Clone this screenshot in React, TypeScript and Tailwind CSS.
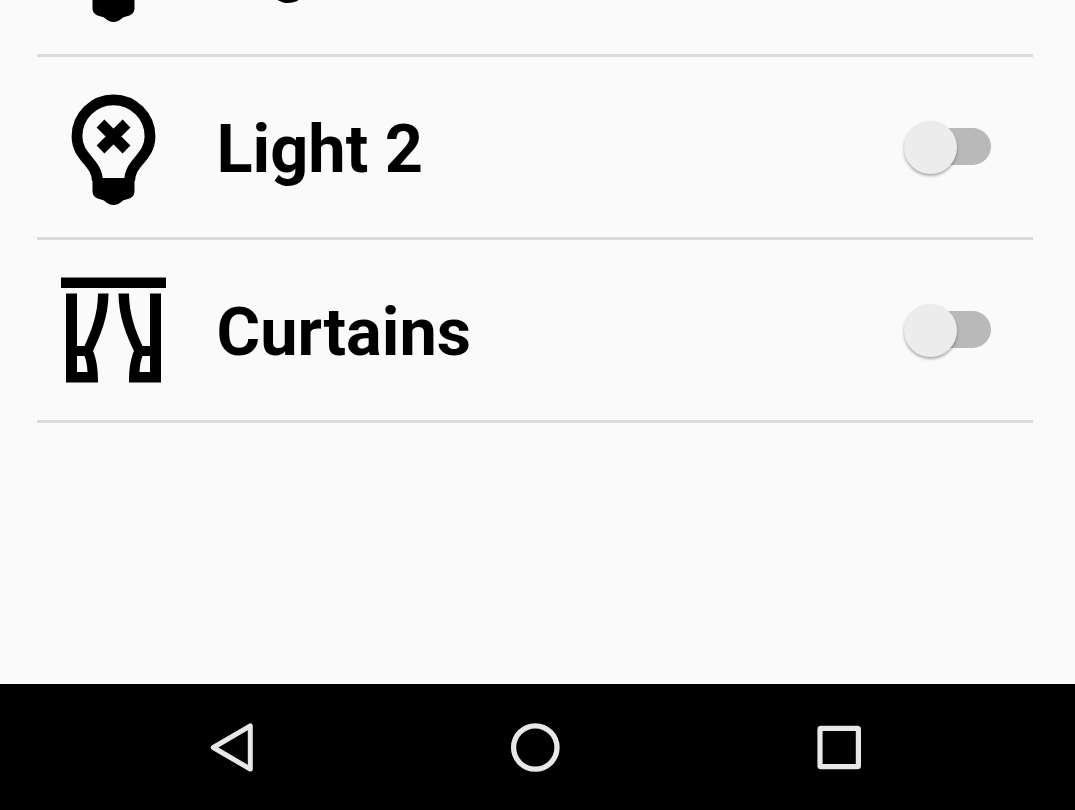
import type { ReactNode } from 'react';

function BulbIcon() {
  return (
    <svg className="h-[180px] w-[120px] shrink-0" viewBox="0 -28 120 180" fill="none">
      <path
        d="M42.400 96C42.400 77 22 73 22 51.300A36.500 36.500 0 0 1 95 51.300C95 73 74.600 77 74.600 96"
        stroke="#000"
        strokeWidth="10.800"
      />
      <path d="M37.500 93H79.500V107Q79 113 71 114.500L68 115.500Q63 120 58.500 120T49 115.500L46 114.500Q38 113 37.500 107Z" fill="#000" />
      <path d="M45.500 38.500L71.500 64.500M71.500 38.500L45.500 64.500" stroke="#000" strokeWidth="11" />
    </svg>
  );
}

const curtainPath =
  'M11 28.500H22V81H29.500C36 67 43 49 43 28.500H53.500C53.500 52 45 71 38 86C41.500 94 43 104 43 117.500H11ZM22 91V107H32.500Q32 97 29.500 91Z';

function CurtainsIcon() {
  return (
    <svg className="h-[180px] w-[120px] shrink-0" viewBox="0 -25 120 180" fill="#000">
      <path d="M6 12.500H111V23H6Z" />
      <path fillRule="evenodd" d={curtainPath} />
      <path fillRule="evenodd" transform="matrix(-1 0 0 1 117 0)" d={curtainPath} />
    </svg>
  );
}

function Toggle() {
  return (
    <button
      role="switch"
      aria-checked="false"
      className="mr-[42px] ml-auto flex h-[54px] w-[87px] shrink-0 items-start"
    >
      <span className="z-10 mt-px size-[53px] shrink-0 rounded-full bg-[#ececec] shadow-[0_2px_3px_rgba(0,0,0,0.32)]" />
      <span className="mt-[8px] -ml-[34px] h-[37px] w-[68px] shrink-0 rounded-full bg-[#b9b9b9]" />
    </button>
  );
}

function Row({ icon, label }: { icon: ReactNode; label: string }) {
  return (
    <li className="flex h-[183px] shrink-0 items-center border-b-3 border-[#dadada] pl-[18px]">
      {icon}
      <span className="ml-[41.500px] pt-[3px] text-[66.700px] leading-[80px] font-bold text-black">{label}</span>
      <Toggle />
    </li>
  );
}

export default function App() {
  return (
    <div className="flex h-[810px] w-[1075px] flex-col overflow-hidden bg-[#fafafa] font-['Roboto',sans-serif]">
      <main className="min-h-0 flex-1">
        <ul className="mr-[42px] ml-[37px] flex h-[423px] flex-col justify-end overflow-hidden">
          <Row icon={<BulbIcon />} label="Light 1" />
          <Row icon={<BulbIcon />} label="Light 2" />
          <Row icon={<CurtainsIcon />} label="Curtains" />
        </ul>
      </main>
      <nav className="flex h-[126px] shrink-0 items-center bg-black pt-[2px] pl-[195px]">
        <button aria-label="Back">
          <svg className="h-[76px] w-[80px]" viewBox="0 0 80 76" fill="none" stroke="#e8e8e8" strokeWidth="5" strokeLinejoin="round">
            <path d="M18.300 37.500L55.300 15.900V59.100Z" />
          </svg>
        </button>
        <button aria-label="Home" className="ml-[225px]">
          <svg className="h-[76px] w-[80px]" viewBox="0 0 80 76" fill="none" stroke="#e8e8e8" strokeWidth="5.300">
            <circle cx="35.300" cy="37.500" r="21.700" />
          </svg>
        </button>
        <button aria-label="Recent apps" className="ml-[220px]">
          <svg className="h-[76px] w-[80px]" viewBox="0 0 80 76" fill="none" stroke="#e8e8e8" strokeWidth="5.200" strokeLinejoin="round">
            <rect x="20" y="18.300" width="38.400" height="38.400" rx="1" />
          </svg>
        </button>
      </nav>
    </div>
  );
}
